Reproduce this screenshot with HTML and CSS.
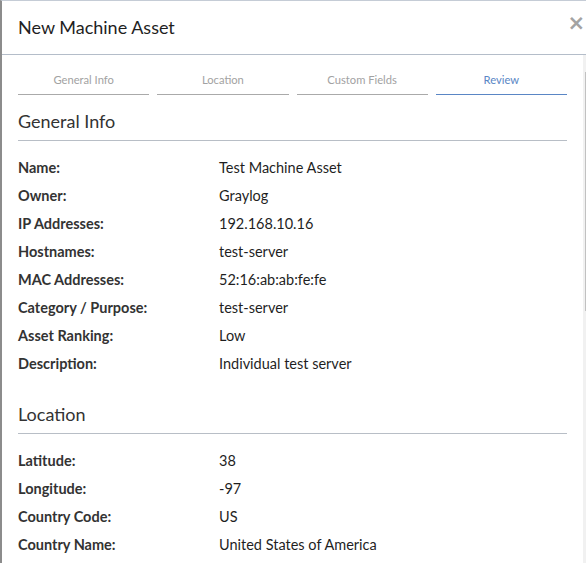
FILE: index.html
```html
<!DOCTYPE html>
<html>
<head>
<meta charset="utf-8">
<link rel="stylesheet" href="styles.css">
</head>
<body>
<div class="modal">
  <div class="modal-header">
    <h4 class="modal-title">New Machine Asset</h4>
    <span class="close">×</span>
  </div>
  <div class="modal-body">
    <div class="content">
      <div class="tabs">
        <div class="tab">General Info</div>
        <div class="tab">Location</div>
        <div class="tab">Custom Fields</div>
        <div class="tab active">Review</div>
      </div>
      <h3 class="section-title first">General Info</h3>
      <dl class="details">
        <dt>Name:</dt><dd>Test Machine Asset</dd>
        <dt>Owner:</dt><dd>Graylog</dd>
        <dt>IP Addresses:</dt><dd>192.168.10.16</dd>
        <dt>Hostnames:</dt><dd>test-server</dd>
        <dt>MAC Addresses:</dt><dd>52:16:ab:ab:fe:fe</dd>
        <dt>Category / Purpose:</dt><dd>test-server</dd>
        <dt>Asset Ranking:</dt><dd>Low</dd>
        <dt>Description:</dt><dd>Individual test server</dd>
      </dl>
      <h3 class="section-title">Location</h3>
      <dl class="details">
        <dt>Latitude:</dt><dd>38</dd>
        <dt>Longitude:</dt><dd>-97</dd>
        <dt>Country Code:</dt><dd>US</dd>
        <dt>Country Name:</dt><dd>United States of America</dd>
      </dl>
    </div>
    <div class="scrollbar"><div class="thumb"></div></div>
  </div>
</div>
</body>
</html>
```
FILE: styles.css
```css
html, body {
  margin: 0;
  padding: 0;
  background: #fff;
}
body {
  width: 586px;
  height: 563px;
  overflow: hidden;
  font-family: "Lato", "Open Sans", sans-serif;
  color: #1f1f1f;
}
.modal {
  height: 563px;
  box-sizing: border-box;
  border-left: 2px solid #8c8c8c;
  border-top: 1px solid #c5ccd6;
  display: flex;
  flex-direction: column;
}
.modal-header {
  height: 54px;
  box-sizing: border-box;
  border-bottom: 1px solid #b4bdc9;
  display: flex;
  align-items: center;
  justify-content: space-between;
  padding: 0 1px 2px 16px;
}
.modal-title {
  margin: 0;
  font-size: 18px;
  font-weight: 400;
  color: #1f1f1f;
}
.close {
  font-size: 21px;
  color: #a3a3a3;
  line-height: 1;
  margin-top: -6px;
  font-family: "DejaVu Sans", sans-serif;
  font-weight: 700;
}
.modal-body {
  flex: 1;
  display: flex;
  min-height: 0;
}
.content {
  flex: 1;
  padding: 12px 16px 0 16px;
  overflow: hidden;
}
.scrollbar {
  width: 3px;
  background: #f1f1f1;
  padding-top: 17px;
  display: flex;
  justify-content: flex-end;
}
.thumb {
  width: 1px;
  height: 239px;
  background: #c1c1c1;
}
.tabs {
  display: grid;
  grid-template-columns: repeat(4, 1fr);
  column-gap: 8px;
}
.tab {
  text-align: center;
  font-size: 11.2px;
  color: #a2a2a2;
  height: 28px;
  line-height: 26px;
  box-sizing: border-box;
  border-bottom: 1px solid #aaa;
}
.tab.active {
  color: #5a86c5;
  border-bottom-color: #5a86c5;
}
.section-title {
  margin: 0;
  font-size: 18px;
  font-weight: 400;
  color: #333;
  box-sizing: border-box;
  line-height: 22px;
  border-bottom: 1px solid #b8bec6;
}
.section-title.first {
  height: 46px;
  padding-top: 15px;
}
.section-title:not(.first) {
  margin-top: 17px;
  padding-top: 8px;
  height: 39px;
}
.details {
  margin: 13px 0 0 0;
  display: grid;
  grid-template-columns: 201px 1fr;
  grid-auto-rows: 28px;
  font-size: 14.5px;
  line-height: 28px;
}
.details dt {
  font-weight: 700;
  color: #333;
}
.details dd {
  margin: 0;
}
```
